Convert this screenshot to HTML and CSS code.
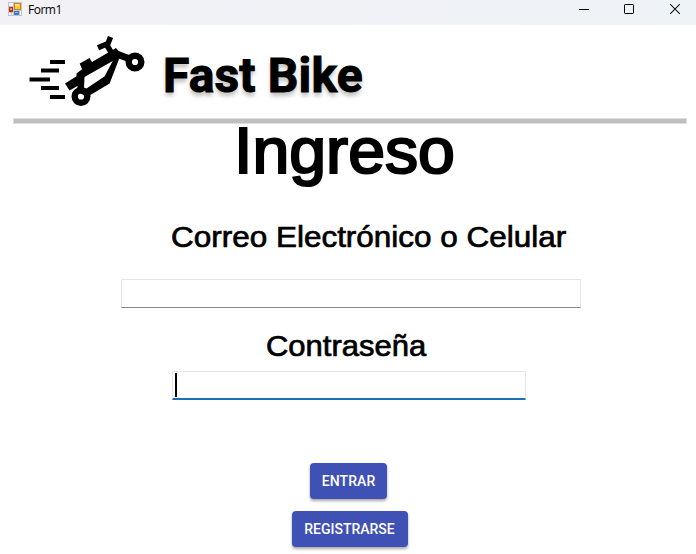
FILE: index.html
```html
<!DOCTYPE html>
<html lang="es">
<head>
<meta charset="utf-8">
<title>Form1</title>
<link rel="stylesheet" href="styles.css">
</head>
<body>
<header class="titlebar">
  <svg class="app-icon" width="14" height="14" viewBox="0 0 14 14">
    <path fill="#c3c3c6" d="M0 0h14v14H0z"/>
    <path fill="#f5f5f7" d="M1 1h4v3H1zM1 11h2v2H1zM4 11h1v2H4zM12 9h1v4h-1z"/>
    <path fill="#b82d25" d="M1 5h4v5H1z"/><path fill="#ed8a7c" d="M2 6h2v2H2z"/>
    <path fill="#c88a10" d="M6 1h7v7H6z"/><path fill="#f8c936" d="M7 2h5v5H7z"/><path fill="#ffe98a" d="M7 2h4v2H7z"/>
    <path fill="#3e76d5" d="M6 9h5v4H6z"/><path fill="#83b0f4" d="M7 10h3v1H7z"/>
  </svg>
  <span class="caption">Form1</span>
  <svg class="controls" width="102" height="12" viewBox="0 0 102 12">
    <path fill="#000" d="M0 5h10v1H0z"/>
    <rect x="45.5" y=".5" width="9" height="9" rx=".7" fill="none" stroke="#000"/>
    <path d="M91.2.2l9.6 9.6M100.800.2l-9.600 9.600" fill="none" stroke="#111" stroke-width="1.1"/>
  </svg>
</header>
<main class="form">
  <div class="brand">
    <svg class="logo" width="116" height="72" viewBox="29 35 116 72">
      <g fill="none" stroke="#000">
        <path stroke-width="4" d="M50 62h15M41 70.500h18M29.500 79.500H50M41 88h18M50 97h15"/>
        <path stroke-width="7" d="M114 53L130 59"/>
        <path stroke-width="5.500" d="M111.500 53L106.500 44.500"/>
        <path stroke-width="5.500" d="M98 47.800L108 43.500L110.500 37"/>
        <circle cx="81" cy="96.500" r="6.300" stroke-width="6.400"/>
        <circle cx="135" cy="62" r="6.300" stroke-width="6.400"/>
      </g>
      <path fill-rule="evenodd" d="M65 83.500L76.500 76.300L76.500 73.500L82 69.200L79.700 63.600L89.500 58L92 62L110 51.500L116 48L121 54L109.600 83.500L87 97L77 91.500L77.500 86L69.500 90.500zM84.500 77L112.700 61L104.700 76.300L86.500 88.500L84 88z"/>
    </svg>
    <span class="name">Fast Bike</span>
  </div>
  <div class="divider"></div>
  <h1 class="heading">Ingreso</h1>
  <label class="label label-user" for="user">Correo Electrónico o Celular</label>
  <div class="field field-user" id="user"></div>
  <label class="label label-pass" for="pass">Contraseña</label>
  <div class="field field-pass" id="pass"><span class="caret"></span></div>
  <div class="actions">
    <button class="button enter">ENTRAR</button>
    <button class="button register">REGISTRARSE</button>
  </div>
</main>
</body>
</html>
```
FILE: styles.css
```css
* { box-sizing: border-box; }
body {
  margin: 0;
  width: 696px;
  height: 554px;
  overflow: hidden;
  background: #fff;
  color: #000;
}
.titlebar {
  display: flex;
  height: 25px;
  padding-left: 8px;
  background: linear-gradient(90deg, #f2f1f6, #eef3f7);
}
.app-icon { margin-top: 2px; }
.caption {
  margin-left: 6px;
  font: 12px/20px "Open Sans", "Noto Sans", sans-serif;
  letter-spacing: -0.5px;
}
.controls { margin: 4px 15px 0 auto; }
.form { display: flex; flex-direction: column; }
.brand { display: flex; height: 93px; padding-left: 29px; }
.logo { margin-top: 10px; }
.name {
  margin: 23px 0 0 18px;
  font: 700 48px/56px Roboto, sans-serif;
  letter-spacing: 0.15px;
  -webkit-text-stroke: 1px #000;
  text-shadow: 0 4px 4px rgba(0, 0, 0, 0.25);
}
.divider {
  height: 6px;
  margin: 0 9px 0 13px;
  background: #bfbfbf;
  border: 1px solid #dedede;
}
.heading {
  width: fit-content;
  height: 70px;
  margin: -8px 0 0 234px;
  font: 400 64px/70px "Liberation Sans", Arial, sans-serif;
  transform: scaleX(1.035);
  transform-origin: left;
  -webkit-text-stroke: 2.2px #000;
}
.label {
  width: fit-content;
  height: 34px;
  font: 29px/34px "Liberation Sans", Arial, sans-serif;
  transform: scaleX(1.085);
  transform-origin: left;
  white-space: nowrap;
  -webkit-text-stroke: 0.7px #000;
}
.label-user { margin: 34px 0 0 171px; }
.label-pass { margin: 21px 0 0 266px; transform: scaleX(1.068); }
.field {
  height: 29px;
  border: 1px solid #e5e5e5;
  border-bottom-color: #858585;
  border-radius: 1px;
}
.field-user { width: 460px; margin: 25px 0 0 121px; }
.field-pass {
  width: 354px;
  margin: 8px 0 0 172px;
  border-bottom: 2px solid #1c70b8;
}
.caret {
  display: block;
  width: 2px;
  height: 24px;
  margin: 1px 0 0 2px;
  background: #000;
}
.actions {
  display: flex;
  flex-direction: column;
  align-items: center;
  gap: 12px;
  padding: 63px 0 0 1px;
}
.button {
  height: 36px;
  padding: 0;
  border: 0;
  border-radius: 4px;
  background: #3f51b5;
  color: #fff;
  font: 500 14px/36px Roboto, sans-serif;
  box-shadow: 0 2px 3px rgba(0, 0, 0, 0.35);
}
.enter { width: 77px; letter-spacing: 0.1px; }
.register { width: 116px; letter-spacing: 0; margin-left: 2px; }
```
